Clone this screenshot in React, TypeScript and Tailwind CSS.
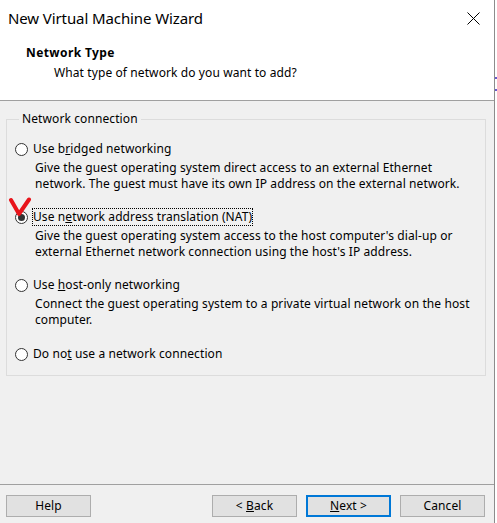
import React from "react";

const font = { fontFamily: '"Noto Sans", "Open Sans", sans-serif' };

function Radio({ checked }: { checked?: boolean }) {
  return (
    <span className="relative flex h-[13px] w-[13px] shrink-0 items-center justify-center rounded-full border border-[#333333] bg-white">
      {checked && <span className="h-[7px] w-[7px] rounded-full bg-[#333333]" />}
    </span>
  );
}

function Btn({ children, primary }: { children: React.ReactNode; primary?: boolean }) {
  return (
    <button
      className={
        primary
          ? "flex h-[22px] w-[85px] items-center justify-center border-2 border-[#0078d7] bg-[#e1e1e1] text-[12px] tracking-[0.1px] text-black"
          : "flex h-[22px] w-[85px] items-center justify-center border border-[#adadad] bg-[#e1e1e1] text-[12px] tracking-[0.1px] text-black"
      }
    >
      <span className="whitespace-pre">{children}</span>
    </button>
  );
}

export default function App() {
  return (
    <div className="flex h-[523px] w-[497px] bg-white text-black" style={font}>
      <div className="flex h-[523px] w-[495px] flex-col border-r border-[#8c8c8c] bg-[#f0f0f0]">
        {/* header */}
        <div className="flex h-[101px] flex-col border-b border-[#a0a0a0] bg-white">
          <div className="flex h-[37px] items-start justify-between pl-[8px] pr-[14px] pt-[8px]">
            <span className="text-[15px] leading-[20px] tracking-[-0.1px]">New Virtual Machine Wizard</span>
            <svg width="13" height="13" viewBox="0 0 13 13" className="mt-[4px]">
              <path d="M0.5 0.5 L12.5 12.5 M12.5 0.5 L0.5 12.5" stroke="#000" strokeWidth="1" fill="none" />
            </svg>
          </div>
          <div className="mt-[8px] pl-[26px] text-[12px] font-bold leading-[16px] tracking-[0.4px]">Network Type</div>
          <div className="mt-[4px] pl-[54px] text-[12px] leading-[16px] tracking-[0.1px]">
            What type of network do you want to add?
          </div>
        </div>

        {/* body */}
        <fieldset className="ml-[6px] mt-[10px] w-[480px] border border-[#dcdcdc] px-[8px] pb-[13px] text-[12px] leading-[16px] tracking-[0.1px]">
          <legend className="ml-[4px] px-[3px] leading-[16px]">Network connection</legend>
          <div className="flex flex-col pt-[14px]">
            <div className="flex items-center gap-[5px]">
              <Radio />
              <span>
                Use b<u>r</u>idged networking
              </span>
            </div>
            <div className="mt-[3px] whitespace-nowrap pl-[20px]">
              Give the guest operating system direct access to an external Ethernet
              <br />
              network. The guest must have its own IP address on the external network.
            </div>

            <div className="relative mt-[17px] flex items-center gap-[5px]">
              <Radio checked />
              <span className="outline-1 outline-dotted outline-black">
                Use n<u>e</u>twork address translation (NAT)
              </span>
              <svg width="24" height="21" viewBox="0 0 24 21" className="absolute left-[-7px] top-[-12px]">
                <path d="M3 3 L11 17 L21 2.5" stroke="#e8141b" strokeWidth="4" fill="none" strokeLinecap="round" strokeLinejoin="round" />
              </svg>
            </div>
            <div className="mt-[3px] whitespace-nowrap pl-[20px]">
              Give the guest operating system access to the host computer's dial-up or
              <br />
              external Ethernet network connection using the host's IP address.
            </div>

            <div className="mt-[17px] flex items-center gap-[5px]">
              <Radio />
              <span>
                Use <u>h</u>ost-only networking
              </span>
            </div>
            <div className="mt-[3px] whitespace-nowrap pl-[20px]">
              Connect the guest operating system to a private virtual network on the host
              <br />
              computer.
            </div>

            <div className="mt-[18px] flex items-center gap-[5px]">
              <Radio />
              <span>
                Do no<u>t</u> use a network connection
              </span>
            </div>
          </div>
        </fieldset>

        <div className="flex-1" />

        {/* footer */}
        <div className="flex h-[39px] items-start border-t border-[#a0a0a0] pl-[6px] pr-[9px] pt-[10px]">
          <Btn>Help</Btn>
          <div className="flex-1" />
          <div className="flex gap-[9px]">
            <Btn>
              {"< "}
              <u>B</u>ack
            </Btn>
            <Btn primary>
              <u>N</u>
              {"ext >"}
            </Btn>
            <Btn>Cancel</Btn>
          </div>
        </div>
      </div>
      <div className="flex w-[2px] flex-col pt-[77px]">
        <div className="h-[2px] w-[2px] bg-[#6a5acd]" />
        <div className="mt-[10px] h-[2px] w-[2px] bg-[#6a5acd]" />
      </div>
    </div>
  );
}
